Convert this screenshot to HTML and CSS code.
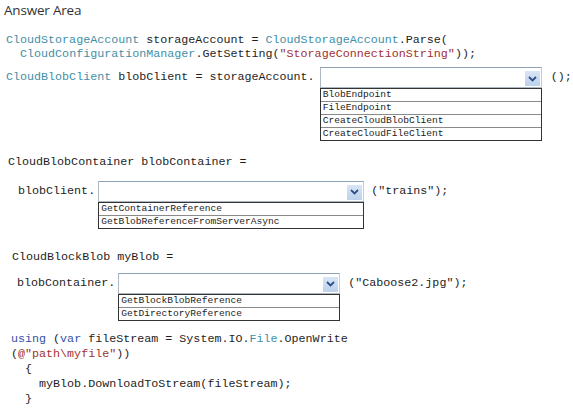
FILE: index.html
```html
<!DOCTYPE html>
<html>
<head>
<meta charset="utf-8">
<link rel="stylesheet" href="styles.css">
</head>
<body>
<div class="page">
  <div class="title">Answer Area</div>
  <div class="code">
    <div class="line l1"><span class="t">CloudStorageAccount</span> storageAccount = <span class="t">CloudStorageAccount</span>.Parse(</div>
    <div class="line l2">  <span class="t">CloudConfigurationManager</span>.GetSetting(<span class="s">"StorageConnectionString"</span>));</div>

    <div class="row r1">
      <span class="lead"><span class="t">CloudBlobClient</span> blobClient = storageAccount.</span>
      <div class="dd dd1">
        <div class="box"><span class="btn"><svg width="9" height="6" viewBox="0 0 9 6"><polyline points="1,1 4.5,4.5 8,1" fill="none" stroke="#2d4f86" stroke-width="1.8"/></svg></span></div>
        <ul class="list">
          <li>BlobEndpoint</li>
          <li>FileEndpoint</li>
          <li>CreateCloudBlobClient</li>
          <li>CreateCloudFileClient</li>
        </ul>
      </div>
      <span class="tail tail1">();</span>
    </div>

    <div class="line l3">CloudBlobContainer blobContainer =</div>

    <div class="row r2">
      <span class="lead">blobClient.</span>
      <div class="dd dd2">
        <div class="box"><span class="btn"><svg width="9" height="6" viewBox="0 0 9 6"><polyline points="1,1 4.5,4.5 8,1" fill="none" stroke="#2d4f86" stroke-width="1.8"/></svg></span></div>
        <ul class="list">
          <li>GetContainerReference</li>
          <li>GetBlobReferenceFromServerAsync</li>
        </ul>
      </div>
      <span class="tail tail2">("trains");</span>
    </div>

    <div class="line l4">CloudBlockBlob myBlob =</div>

    <div class="row r3">
      <span class="lead">blobContainer.</span>
      <div class="dd dd3">
        <div class="box"><span class="btn"><svg width="9" height="6" viewBox="0 0 9 6"><polyline points="1,1 4.5,4.5 8,1" fill="none" stroke="#2d4f86" stroke-width="1.8"/></svg></span></div>
        <ul class="list">
          <li>GetBlockBlobReference</li>
          <li>GetDirectoryReference</li>
        </ul>
      </div>
      <span class="tail tail3">("Caboose2.jpg");</span>
    </div>

    <div class="using">
      <div class="uline"><span class="k">using</span> (<span class="k">var</span> fileStream = System.IO.<span class="t">File</span>.OpenWrite</div>
      <div class="uline">(<span class="s">@"path\myfile"</span>))</div>
      <div class="uline">  {</div>
      <div class="uline">    myBlob.DownloadToStream(fileStream);</div>
      <div class="uline">  }</div>
    </div>
  </div>
</div>
</body>
</html>
```
FILE: styles.css
```css
html, body {
  margin: 0;
  padding: 0;
  background: #ffffff;
}

.page {
  width: 573px;
  height: 409px;
  overflow: hidden;
  position: relative;
}

.title {
  font-family: "Open Sans", "Noto Sans", sans-serif;
  font-size: 13.5px;
  line-height: 20px;
  color: #333333;
  padding-left: 4px;
  letter-spacing: -0.2px;
}

.code {
  font-family: "Liberation Mono", "DejaVu Sans Mono", monospace;
  font-size: 11.7px;
  color: #1e1e1e;
  padding-top: 12.5px;
}

.line {
  white-space: pre;
  line-height: 14px;
  height: 14px;
}

.l1, .l2 {
  padding-left: 6px;
}

.l3 {
  margin-top: 14px;
  padding-left: 8px;
}

.l4 {
  margin-top: 21px;
  padding-left: 12px;
}

.t { color: #3f8fa7; }
.s { color: #a3322e; }
.k { color: #3552a6; }

.row {
  display: flex;
  align-items: flex-start;
}

.lead,
.tail {
  white-space: pre;
  line-height: 21px;
  height: 21px;
}

.r1 {
  margin-top: 6.5px;
  padding-left: 6px;
}

.r2 {
  margin-top: 11.5px;
  padding-left: 18px;
}

.r3 {
  margin-top: 9px;
  padding-left: 17px;
}

.dd {
  display: flex;
  flex-direction: column;
  flex: none;
}

.dd1 { width: 222px; margin-left: 5px; }
.dd2 { width: 266px; margin-left: 3px; }
.dd3 { width: 222px; margin-left: 3px; }

.box {
  box-sizing: border-box;
  height: 21px;
  border: 1px solid #aeb8c4;
  border-top-color: #8ea2b8;
  border-right-color: #c4ccd4;
  background: #ffffff;
  display: flex;
  justify-content: flex-end;
  padding: 3px 1px 1px 0;
}

.btn {
  width: 15px;
  background: linear-gradient(#d9e6f6, #bcd1ec);
  display: flex;
  align-items: center;
  justify-content: center;
}

.list {
  list-style: none;
  margin: 0;
  padding: 0;
  border: 1px solid #333333;
  background: #ffffff;
  font-size: 9.6px;
  color: #1c1c1c;
}

.list li {
  line-height: 12px;
  height: 12px;
  padding-left: 2px;
  white-space: pre;
}

.list li + li {
  border-top: 1px solid #8a8a8a;
}

.tail1 { margin-left: 9px; }
.tail2 { margin-left: 7px; }
.tail3 { margin-left: 8px; }

.using {
  margin-top: 11px;
  padding-left: 11px;
}

.uline {
  white-space: pre;
  line-height: 15px;
  height: 15px;
}
```
